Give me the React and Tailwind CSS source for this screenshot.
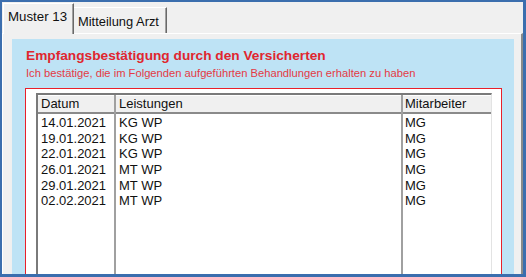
import React from 'react';

const rows = [
  { datum: '14.01.2021', leistung: 'KG WP', mitarbeiter: 'MG' },
  { datum: '19.01.2021', leistung: 'KG WP', mitarbeiter: 'MG' },
  { datum: '22.01.2021', leistung: 'KG WP', mitarbeiter: 'MG' },
  { datum: '26.01.2021', leistung: 'MT WP', mitarbeiter: 'MG' },
  { datum: '29.01.2021', leistung: 'MT WP', mitarbeiter: 'MG' },
  { datum: '02.02.2021', leistung: 'MT WP', mitarbeiter: 'MG' },
];

const columns = [
  { key: 'datum', title: 'Datum', width: 'w-[78px]', pad: 'pl-[3px]' },
  { key: 'leistung', title: 'Leistungen', width: 'w-[287px]', pad: 'pl-[3px]' },
  { key: 'mitarbeiter', title: 'Mitarbeiter', width: 'flex-1', pad: 'pl-[2px]' },
];

function Column({ col, last }) {
  return (
    <div
      className={`${col.width} flex flex-col ${
        last ? '' : 'border-r-2 border-r-[#a0a0a0]'
      }`}
    >
      <div
        className={`h-[19px] shrink-0 bg-[#f0f0f0] border-b-2 border-b-[#8a8a8a] border-t border-t-white ${col.pad} leading-[16px]`}
      >
        {col.title}
      </div>
      <div className="pt-[1px]">
        {rows.map((r, i) => (
          <div key={i} className={`h-[15.7px] leading-[15.7px] ${col.pad}`}>
            {r[col.key]}
          </div>
        ))}
      </div>
    </div>
  );
}

export default function App() {
  return (
    <div
      className="w-[526px] h-[277px] overflow-hidden flex flex-col bg-[#f0f0f0] border-t-2 border-l-2 border-r-[3px] border-b-[3px] border-[#3b6eae] text-[#111] select-none"
      style={{ fontFamily: '"Liberation Sans", Arial, sans-serif' }}
    >
      {/* tabs */}
      <div className="flex items-end h-[31px] pl-[1px] pt-[1px] shrink-0">
        <div className="relative z-10 -mb-[1px] w-[71px] h-[31px] bg-[#f0f0f0] border-l border-t border-white border-r border-r-[#696969] shadow-[inset_-1px_0_#a0a0a0] pl-[4px] pt-[5px] text-[13.3px] leading-[16px]">
          Muster 13
        </div>
        <div className="w-[93px] h-[26px] bg-[#f0f0f0] border-t border-white border-r border-r-[#696969] shadow-[inset_-1px_0_#a0a0a0] pl-[4px] pt-[6px] text-[12.9px] leading-[16px]">
          Mitteilung Arzt
        </div>
      </div>

      {/* tab panel */}
      <div className="flex-1 min-h-0 flex flex-col border-t border-l border-white border-r-2 border-r-[#8a8a8a] pt-[5px] pl-[9px] pr-[7px]">
        <div className="flex-1 min-h-0 flex flex-col bg-[#bee3f5] pt-[9px] pl-[13px] pr-[12px]">
          <div className="pl-[1px] text-[13.7px] leading-[16px] font-bold text-[#e0262f] whitespace-nowrap">
            Empfangsbestätigung durch den Versicherten
          </div>
          <div className="pl-[1px] mt-[3px] text-[11.2px] leading-[13px] text-[#e43a44] whitespace-nowrap">
            Ich bestätige, die im Folgenden aufgeführten Behandlungen erhalten zu haben
          </div>

          {/* red framed box */}
          <div className="mt-[8px] flex-1 min-h-0 flex flex-col border border-[#e8202a] border-b-0 bg-white pt-[4px] pl-[10px] pr-[9px]">
            <div className="flex-1 min-h-0 flex border-t-2 border-l-2 border-t-[#7a7a7a] border-l-[#7a7a7a] border-r border-r-[#e3e3e3] text-[13px]">
              {columns.map((col, i) => (
                <Column key={col.key} col={col} last={i === columns.length - 1} />
              ))}
            </div>
          </div>
        </div>
      </div>
    </div>
  );
}
